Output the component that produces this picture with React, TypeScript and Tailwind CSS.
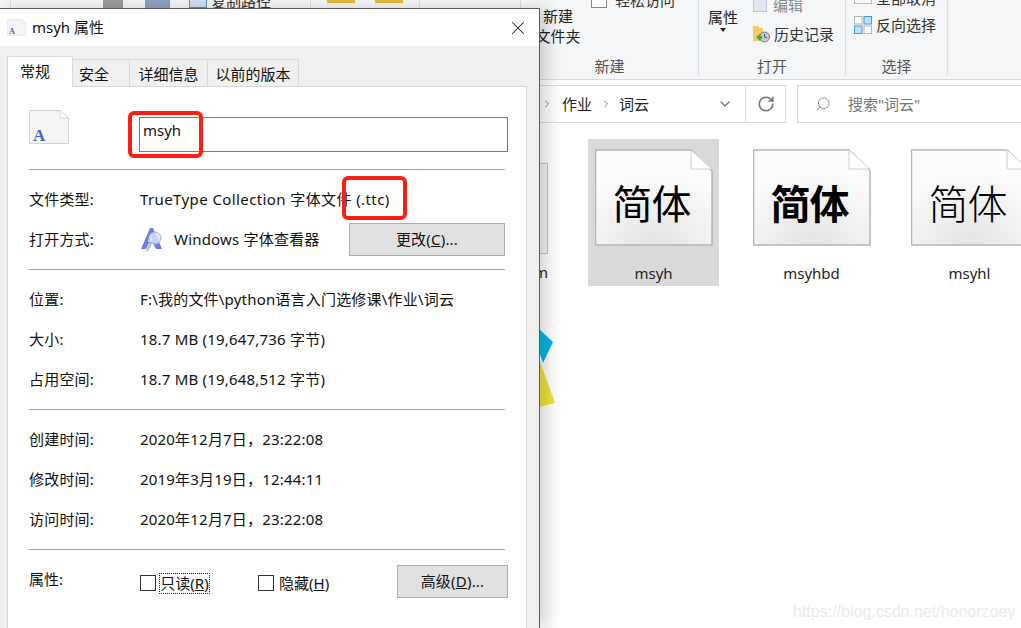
import React from 'react';
import { ChevronDown, ChevronRight, RotateCw, Search, X } from 'lucide-react';

const FONT = 'font-["Noto_Sans","Noto_Sans_CJK_SC",sans-serif]';

const FontFileIcon = ({ className }: { className: string }) => (
  <svg viewBox="0 0 40 34" className={className}>
    <path d="M0.5 0.5H31L39.5 8V33.5H0.5Z" fill="#f5f5f5" stroke="#d2d2d2" />
    <path d="M31 0.5V8H39.5Z" fill="#fff" stroke="#d8d8d8" />
    <text x="4" y="31" fontFamily="Liberation Serif, serif" fontWeight="700" fontSize="17" fill="#3f67c4">
      A
    </text>
  </svg>
);

const ViewerIcon = () => (
  <svg viewBox="0 0 24 26" className="w-[24px] h-[26px]">
    <path d="M1 22L10 1H13L22 22H16L13 16H9L6 22Z" fill="#6d80d8" />
    <path d="M10 7L13 15H8Z" fill="#fff" />
    <circle cx="15" cy="11" r="6" fill="#d3e2f4" fillOpacity="0.85" stroke="#9fb0d0" />
    <path d="M11 16L7 24" stroke="#bdbdbd" strokeWidth="2.5" />
  </svg>
);

const Rule = () => <div className="h-px bg-[#a0a0a0]" />;

const InfoRow = ({ label, value, valueClass = '' }: { label: string; value: string; valueClass?: string }) => (
  <div className="flex items-center h-10 text-[15px] tracking-[0.2px] text-[#111]">
    <div className="w-[111px]">{label}</div>
    <div className={valueClass}>{value}</div>
  </div>
);

const Tab = ({ label, className }: { label: string; className: string }) => (
  <div className={`flex items-center border border-b-0 border-[#d9d9d9] text-[15px] text-[#111] ${className}`}>
    {label}
  </div>
);

const Checkbox = ({ className = '' }: { className?: string }) => (
  <div className={`w-4 h-4 border border-[#333] bg-white shrink-0 ${className}`} />
);

const WinButton = ({ children, className }: { children: React.ReactNode; className: string }) => (
  <div className={`flex items-center justify-center h-[33px] bg-[#e1e1e1] border border-[#adadad] text-[15px] tracking-[0.2px] text-[#111] ${className}`}>
    {children}
  </div>
);

const Dialog = () => (
  <div className="absolute left-0 top-2 w-[540px] h-[620px] flex flex-col bg-[#f0f0f0] border-t border-r border-[#5a5a5a] shadow-[8px_0_14px_rgba(0,0,0,0.16)]">
    <div className="flex items-center h-[37px] bg-white shrink-0 pl-[7px] pr-[10px]">
      <FontFileIcon className="w-[19px] h-[17px]" />
      <span className="ml-[6px] text-[15px] text-[#111]">msyh 属性</span>
      <X className="ml-auto w-[22px] h-[22px] text-[#222]" strokeWidth={1.1} />
    </div>
    <div className="flex items-end h-[40px] pl-[7px] shrink-0">
      <Tab label="常规" className="w-[66px] h-[31px] pl-[12px] pb-[2px] bg-white relative z-10 -mb-px" />
      <Tab label="安全" className="w-[57px] h-[27px] pl-[6px] pt-[2px] border-l-0" />
      <Tab label="详细信息" className="w-[78px] h-[27px] justify-center pt-[2px] border-l-0" />
      <Tab label="以前的版本" className="w-[91px] h-[27px] justify-center pt-[2px] border-l-0" />
    </div>
    <div className="ml-[7px] w-[520px] flex-1 bg-white border border-b-0 border-[#d9d9d9] px-[21px]">
      <div className="flex items-start h-[82px] pt-[23px] -mr-[3px]">
        <FontFileIcon className="w-[40px] h-[34px] shrink-0" />
        <div className="ml-[70px] w-[369px] h-[35px] mt-[7px] border border-[#7a7a7a] pl-[3px] text-[15px] leading-[24px] text-[#111] shrink-0">
          msyh
        </div>
      </div>
      <Rule />
      <div className="pt-[9px] h-[99px]">
        <InfoRow label="文件类型:" value="TrueType Collection 字体文件 (.ttc)" valueClass="tracking-[0.4px]" />
        <div className="flex items-center h-[41px] text-[15px] tracking-[0.2px] text-[#111]">
          <div className="w-[111px]">打开方式:</div>
          <ViewerIcon />
          <div className="ml-[10px]">Windows 字体查看器</div>
          <WinButton className="ml-auto w-[156px]">
            更改(<span className="underline">C</span>)...
          </WinButton>
        </div>
      </div>
      <Rule />
      <div className="pt-[9px] h-[139px]">
        <InfoRow label="位置:" value="F:\我的文件\python语言入门选修课\作业\词云" />
        <InfoRow label="大小:" value="18.7 MB (19,647,736 字节)" />
        <InfoRow label="占用空间:" value="18.7 MB (19,648,512 字节)" />
      </div>
      <Rule />
      <div className="pt-[9px] h-[139px]">
        <InfoRow label="创建时间:" value="2020年12月7日，23:22:08" />
        <InfoRow label="修改时间:" value="2019年3月19日，12:44:11" />
        <InfoRow label="访问时间:" value="2020年12月7日，23:22:08" />
      </div>
      <Rule />
      <div className="flex items-center h-[48px] mt-[7px] text-[15px] text-[#111] -mr-[3px]">
        <div className="w-[111px] -mt-[3px]">属性:</div>
        <div className="flex items-center h-[21px] mt-[4px]">
          <Checkbox />
          <span className="ml-[3px] w-[51px] h-[21px] flex items-center justify-center border border-dotted border-[#222]">
            只读(<span className="underline">R</span>)
          </span>
        </div>
        <div className="flex items-center ml-[48px] mt-[4px]">
          <Checkbox />
          <span className="ml-[5px]">
            隐藏(<span className="underline">H</span>)
          </span>
        </div>
        <WinButton className="ml-auto w-[111px]">
          高级(<span className="underline">D</span>)...
        </WinButton>
      </div>
    </div>
  </div>
);

const RibbonGroup = ({ label, className, children }: { label?: string; className: string; children?: React.ReactNode }) => (
  <div className={`relative flex flex-col overflow-hidden border-r border-[#dcdfe3] h-[76px] ${className}`}>
    <div className="flex-1 min-h-0">{children}</div>
    {label && <div className="h-[22px] text-center text-[15px] leading-[24px] text-[#555]">{label}</div>}
  </div>
);

const SelectIcon = () => (
  <svg viewBox="0 0 18 18" className="w-[18px] h-[18px] shrink-0">
    <rect x="0.5" y="0.5" width="7.5" height="7.5" fill="#fff" stroke="#b5b5b5" />
    <rect x="10" y="0.5" width="7.5" height="7.5" fill="#bfe0fb" stroke="#3a9be8" />
    <rect x="0.5" y="10" width="7.5" height="7.5" fill="#bfe0fb" stroke="#3a9be8" />
    <rect x="10" y="10" width="7.5" height="7.5" fill="#fff" stroke="#b5b5b5" />
  </svg>
);

const HistoryIcon = () => (
  <svg viewBox="0 0 17 18" className="w-[17px] h-[18px] shrink-0">
    <path d="M0 1H6V3H10V16H0Z" fill="#f2cd6c" />
    <circle cx="11.5" cy="12" r="5" fill="#c8c8c8" stroke="#777" />
    <path d="M11.5 9V12L14 13" stroke="#555" fill="none" />
    <path d="M3 12L7 9V11H9V14H7V16Z" fill="#3fae3a" />
  </svg>
);

const Ribbon = () => (
  <div className="flex h-[80px] bg-[#f5f6f7] border-b border-[#d9d9d9] shrink-0 text-[15px] text-[#333]">
    <RibbonGroup className="w-[11px]" />
    <RibbonGroup className="w-[300px]">
      <div className="flex items-start -mt-[6px] pl-[92px] gap-[22px]">
        <div className="w-[20px] h-[8px] mt-[6px] bg-[#9a9a9a]" />
        <div className="w-[25px] h-[8px] mt-[6px] bg-[#8ea2c4]" />
        <div className="flex items-start -ml-[3px]">
          <div className="w-[18px] h-[11px] mt-[3px] bg-[#cfe0f2] border border-[#5d8dc0]" />
          <span className="ml-[4px] leading-[14px]">复制路径</span>
        </div>
      </div>
    </RibbonGroup>
    <RibbonGroup className="w-[109px]">
      <div className="flex pl-[16px] gap-[20px]">
        <div className="w-[28px] h-[3px] bg-[#e8b93e]" />
        <div className="w-[28px] h-[3px] bg-[#e8b93e]" />
      </div>
    </RibbonGroup>
    <RibbonGroup className="w-[101px]" />
    <RibbonGroup label="新建" className="w-[178px]">
      <div className="flex items-start">
        <div className="w-[68px] pt-[6px] pl-[6px] text-center leading-[20px] text-[#222]">
          新建
          <br />
          文件夹
        </div>
        <div className="flex items-start -mt-[7px] ml-[2px]">
          <Checkbox className="border-[#888] mt-[-1px]" />
          <span className="ml-[8px] leading-[14px] text-[#333]">轻松访问</span>
        </div>
      </div>
    </RibbonGroup>
    <RibbonGroup label="打开" className="w-[147px]">
      <div className="flex items-start">
        <div className="w-[46px] pl-[2px] pt-[7px] text-center leading-[20px] text-[#222]">
          属性
          <div className="mx-auto mt-[1px] w-0 h-0 border-x-[3px] border-x-transparent border-t-[4px] border-t-[#222]" />
        </div>
        <div className="ml-[8px] flex flex-col -mt-[2px]">
          <div className="flex items-center h-[14px] gap-[6px] text-[#888]">
            <div className="w-[14px] h-[14px] bg-[#dfe6ef] border border-[#b9c6d8]" />
            编辑
          </div>
          <div className="flex items-center h-[20px] mt-[12px] gap-[4px] text-[#333]">
            <HistoryIcon />
            历史记录
          </div>
        </div>
      </div>
    </RibbonGroup>
    <RibbonGroup label="选择" className="w-[102px]">
      <div className="pl-[8px] -mt-[9px] flex flex-col">
        <div className="flex items-center h-[14px] gap-[4px]">
          <div className="w-[18px] h-[8px] mt-[4px] border-x border-b border-[#bbb]" />
          全部取消
        </div>
        <div className="flex items-center h-[18px] mt-[11px] gap-[4px]">
          <SelectIcon />
          反向选择
        </div>
      </div>
    </RibbonGroup>
  </div>
);

const AddressBar = () => (
  <div className="flex pt-[5px] h-[44px] shrink-0 bg-white">
    <div className="ml-[520px] w-[266px] h-[38px] flex items-center border border-l-0 border-[#d9d9d9] text-[15px] text-[#222]">
      <ChevronRight className="ml-[21px] w-[12px] h-[12px] text-[#888]" />
      <span className="ml-[9px]">作业</span>
      <ChevronRight className="ml-[8px] w-[12px] h-[12px] text-[#888]" />
      <span className="ml-[7px]">词云</span>
      <ChevronDown className="ml-[68px] w-[16px] h-[16px] text-[#777]" />
      <div className="ml-[12px] h-full border-l border-[#d9d9d9] flex items-center justify-center flex-1">
        <RotateCw className="w-[18px] h-[18px] text-[#777]" strokeWidth={2.25} />
      </div>
    </div>
    <div className="ml-[11px] flex-1 h-[38px] flex items-center border border-r-0 border-[#d9d9d9] pl-[17px] text-[15px] text-[#777]">
      <Search className="w-[16px] h-[16px] -scale-x-100" strokeWidth={1.25} />
      <span className="ml-[17px]">搜索"词云"</span>
    </div>
  </div>
);

const PreviewIcon = ({ weight }: { weight: string }) => (
  <div className="relative w-[118px] h-[97px]">
    <svg viewBox="0 0 118 97" className="w-[118px] h-[97px]">
      <defs>
        <radialGradient id="paper" cx="0.5" cy="1" r="0.8">
          <stop offset="0" stopColor="#e4e4e4" />
          <stop offset="1" stopColor="#fcfcfc" />
        </radialGradient>
      </defs>
      <path d="M0.5 1H96L117 22V96H0.5Z" fill="url(#paper)" stroke="#b4b4b4" strokeWidth="1.5" />
      <path d="M96 1V20H117Z" fill="#fff" stroke="#cfcfcf" />
    </svg>
    <div className={`absolute left-0 right-[4px] top-[23px] text-center text-[40px] leading-[60px] tracking-[-1px] text-black font-["Noto_Sans_CJK_SC",sans-serif] ${weight}`}>
      简体
    </div>
  </div>
);

const FileTile = ({ name, weight, selected }: { name: string; weight: string; selected?: boolean }) => (
  <div className={`w-[131px] h-[147px] shrink-0 flex flex-col items-center pt-[10px] ${selected ? 'bg-[#d9d9d9]' : ''}`}>
    <PreviewIcon weight={weight} />
    <div className="mt-[16px] text-[15px] text-[#222]">{name}</div>
  </div>
);

const FileArea = () => (
  <div className="flex-1 bg-white pt-[15px]">
    <div className="flex pl-[430px] gap-[27px]">
      <div className="w-[131px] h-[147px] shrink-0 flex flex-col items-end pr-[13px] pt-[24px]">
        <div className="w-[100px] h-[91px] bg-[#f5f5f5] border border-[#c4c4c4]" />
        <div className="mt-[7px] text-[15px] text-[#222]">m</div>
      </div>
      <FileTile name="msyh" weight="font-normal" selected />
      <FileTile name="msyhbd" weight="font-bold" />
      <FileTile name="msyhl" weight="font-light" />
    </div>
    <svg viewBox="0 0 30 80" className="ml-[530px] mt-[41px] w-[30px] h-[80px]">
      <path d="M9 32L25 76L9 80Z" fill="#ece53a" />
      <path d="M9 2L23 15L13 36L9 24Z" fill="#0ab4e6" />
    </svg>
  </div>
);

export default function App() {
  return (
    <div className={`relative w-[1021px] h-[628px] overflow-hidden flex flex-col bg-white ${FONT}`}>
      <Ribbon />
      <AddressBar />
      <FileArea />
      <Dialog />
      <div className="absolute left-[128px] top-[111px] w-[75px] h-[47px] border-[4px] border-[#ff1e14] rounded-md" />
      <div className="absolute left-[342px] top-[176px] w-[65px] h-[44px] border-[4px] border-[#ff1e14] rounded-md" />
      <div className="absolute left-[793px] top-[600px] text-[16px] text-[#ebebeb] font-['Liberation_Sans',sans-serif]">
        https://blog.csdn.net/honorzoey
      </div>
    </div>
  );
}
